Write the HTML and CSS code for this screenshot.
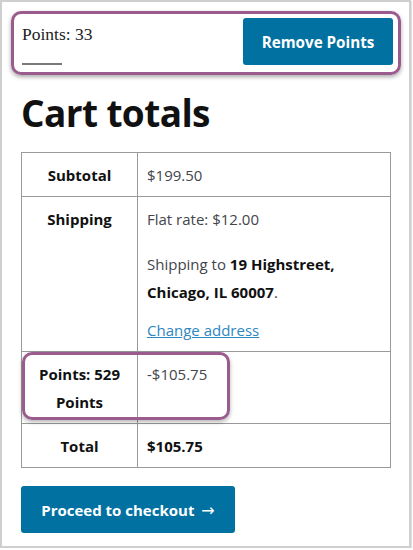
FILE: index.html
```html
<!DOCTYPE html>
<html>
<head>
<meta charset="utf-8">
<link rel="stylesheet" href="styles.css">
</head>
<body>
<div class="frame">
  <div class="points-box">
    <div class="points-left">
      <span class="points-label">Points: 33</span>
      <span class="points-rule"></span>
    </div>
    <button class="btn btn-remove">Remove Points</button>
  </div>
  <div class="content">
    <h2 class="title">Cart totals</h2>
    <div class="table-wrap">
      <table class="totals">
        <tr>
          <th>Subtotal</th>
          <td>$199.50</td>
        </tr>
        <tr>
          <th>Shipping</th>
          <td>
            <p class="ship-rate">Flat rate: $12.00</p>
            <p class="ship-dest">Shipping to <strong>19 Highstreet,</strong><br><strong>Chicago, IL 60007</strong>.</p>
            <p class="ship-change"><a href="#">Change address</a></p>
          </td>
        </tr>
        <tr>
          <th>Points: 529 Points</th>
          <td>-$105.75</td>
        </tr>
        <tr>
          <th>Total</th>
          <td><strong>$105.75</strong></td>
        </tr>
      </table>
      <div class="highlight"></div>
    </div>
    <button class="btn btn-checkout">Proceed to checkout <span class="arrow">&rarr;</span></button>
  </div>
</div>
</body>
</html>
```

FILE: styles.css
```css
html, body {
  margin: 0;
  padding: 0;
  background: #ffffff;
}

.frame {
  width: 411px;
  height: 548px;
  box-sizing: border-box;
  border: 2px solid #cfcfcf;
  box-shadow: 1px 1px 1px #e2e2e2;
  padding: 9px 8px 0 9px;
  font-family: "Open Sans", "Liberation Sans", sans-serif;
  font-size: 15px;
  color: #43454b;
  background: #fff;
}

.points-box {
  height: 64px;
  box-sizing: border-box;
  border: 3px solid #9a5b8e;
  border-radius: 10px;
  box-shadow: 0 2px 4px rgba(0, 0, 0, 0.35);
  display: flex;
  justify-content: space-between;
  align-items: flex-start;
  padding: 4px 5px 0 8px;
}

.points-left {
  display: flex;
  flex-direction: column;
  padding-top: 4px;
}

.points-label {
  font-family: "Liberation Serif", serif;
  font-size: 17.5px;
  line-height: 24px;
  color: #222;
}

.points-rule {
  display: block;
  width: 40px;
  height: 2px;
  background: #7a7a7a;
  margin-top: 17px;
}

.btn {
  background: #0071a1;
  color: #fff;
  border: 0;
  border-radius: 3px;
  font-family: "Open Sans", "Liberation Sans", sans-serif;
  font-weight: 700;
  font-size: 15px;
  height: 47px;
  cursor: pointer;
}

.btn-remove {
  width: 150px;
  padding: 0;
  font-size: 15.2px;
}

.content {
  padding-left: 10px;
  padding-right: 10px;
}

.title {
  margin: 12px 0 0 0;
  font-size: 37px;
  letter-spacing: -0.6px;
  line-height: 52px;
  font-weight: 700;
  color: #111;
}

.table-wrap {
  position: relative;
  margin-top: 13px;
}

.totals {
  width: 370px;
  border-collapse: collapse;
  line-height: 28px;
}

.totals th,
.totals td {
  border: 1px solid #9a9a9a;
  padding: 8px 9px 7px 9px;
  vertical-align: top;
}

.totals th {
  width: 97px;
  text-align: center;
  font-weight: 700;
  color: #111;
}

.totals td {
  text-align: left;
}

.totals strong {
  color: #111;
}

.totals p {
  margin: 0;
}

.ship-dest {
  margin-top: 17px !important;
}

.ship-change {
  margin-top: 10px !important;
}

.ship-change a {
  color: #2f86c0;
  text-decoration: underline;
}

.highlight {
  position: absolute;
  left: 1px;
  top: 200px;
  width: 208px;
  height: 68px;
  box-sizing: border-box;
  border: 3px solid #9a5b8e;
  border-radius: 10px;
  box-shadow: 0 2px 4px rgba(0, 0, 0, 0.3);
}

.btn-checkout {
  margin-top: 18px;
  padding: 0;
  width: 214px;
}

.arrow {
  font-family: "DejaVu Sans", sans-serif;
  font-weight: 400;
  font-size: 16px;
  margin-left: 3px;
}
```
